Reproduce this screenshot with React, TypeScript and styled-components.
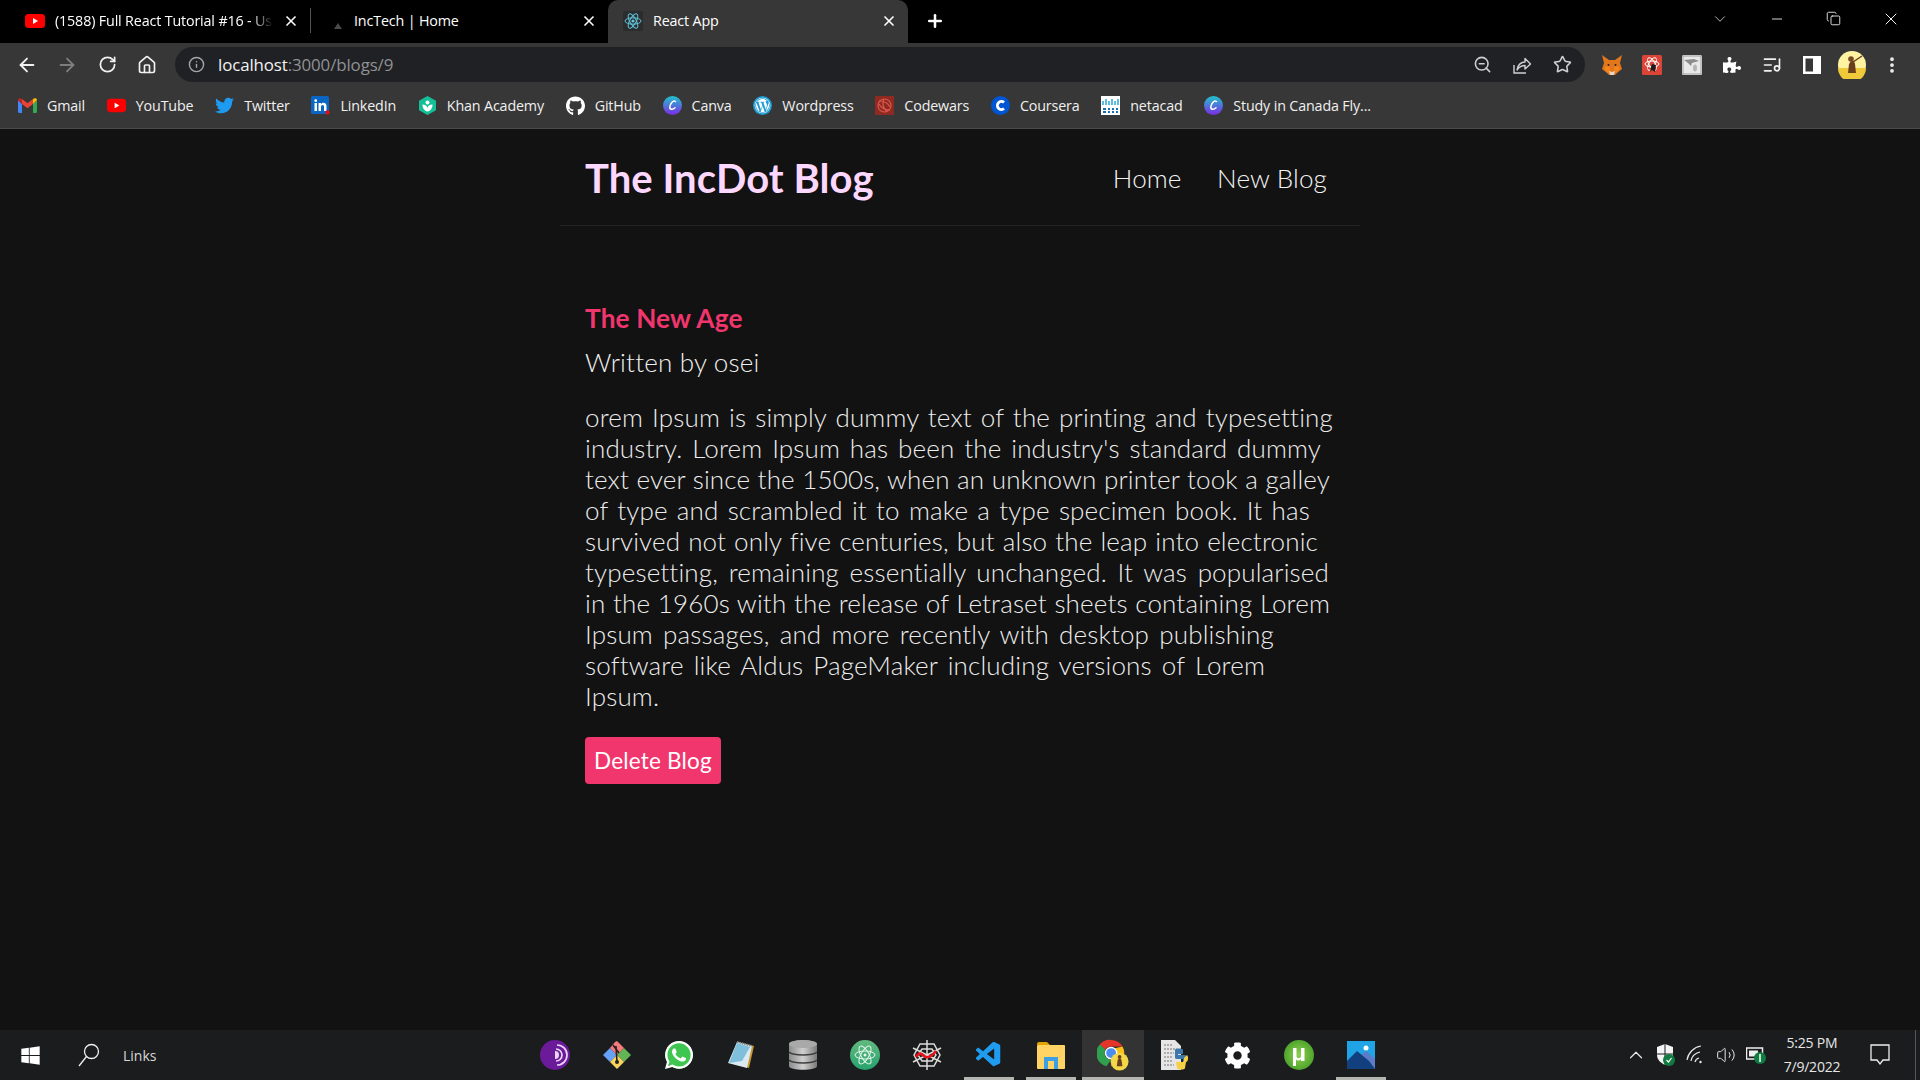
import React from 'react';
import styled, { createGlobalStyle } from 'styled-components';
import { FaTwitter, FaGithub, FaWordpressSimple, FaWhatsapp, FaPuzzlePiece, FaWindows, FaCog } from 'react-icons/fa';
import { VscVscode } from 'react-icons/vsc';
import { ArrowLeft, ArrowRight, RotateCw, Home, Info, ZoomOut, Star, ListMusic, EllipsisVertical, ChevronUp, ChevronDown, Volume2, X, Plus, Minus, Copy } from 'lucide-react';

const Global = createGlobalStyle`
  html, body { margin: 0; padding: 0; background: #121212; }
  #root { width: 1920px; height: 1080px; overflow: hidden; }
`;

const Page = styled.div`
  width: 1920px; height: 1080px; display: flex; flex-direction: column;
  font-family: "Open Sans", "Noto Sans", sans-serif; color: #fff;
`;
const TabStrip = styled.div`
  height: 43px; flex: none; background: #000; display: flex; padding-left: 10px; align-items: stretch;
`;
const Tab = styled.div<{ $active?: boolean; $width: number; $inset: number }>`
  width: ${p => p.$width}px; flex: none; display: flex; align-items: center; padding: 0 11px 2px ${p => p.$inset}px; gap: 10px;
  background: ${p => (p.$active ? '#373737' : 'transparent')};
  border-radius: ${p => (p.$active ? '10px 10px 0 0' : '0')};
  font-size: 14.3px; letter-spacing: -0.15px; box-sizing: border-box; position: relative;
`;
const TabIcon = styled.span`
  width: 20px; height: 20px; flex: none; display: flex; align-items: center; justify-content: center;
`;
const TabTitle = styled.span<{ $fade?: boolean }>`
  flex: 1; white-space: nowrap; overflow: hidden; min-width: 0;
  ${p => (p.$fade ? 'mask-image: linear-gradient(to right, #000 90%, transparent);' : '')}
`;
const TabDivider = styled.div`
  width: 1px; height: 25px; margin: 8px 0 0; background: #555;
`;
const NewTab = styled.div`
  width: 54px; display: flex; align-items: center; justify-content: center; padding-bottom: 2px;
`;
const WindowControls = styled.div`
  margin-left: auto; display: flex; align-items: center; padding: 0 1px 6px 0; color: #f4f4f4;
`;
const WinBtn = styled.div`
  width: 57px; display: flex; justify-content: center;
`;
const Toolbar = styled.div`
  height: 47px; flex: none; background: #373737; display: flex; align-items: center; padding: 0 8px 4px 7px; box-sizing: border-box;
`;
const ToolBtn = styled.div<{ $dim?: boolean }>`
  width: 40px; height: 36px; flex: none; display: flex; align-items: center; justify-content: center;
  color: ${p => (p.$dim ? '#7d7e80' : '#f1f1f1')};
`;
const Omnibox = styled.div`
  width: 1410px; height: 35px; margin-left: 8px; border-radius: 18px; background: #202124;
  display: flex; align-items: center; padding: 0 3px 0 13px; box-sizing: border-box; flex: none;
`;
const UrlIcon = styled.span`
  width: 18px; color: #a4a6a9; display: flex; margin-right: 12px;
`;
const Url = styled.div`
  flex: 1; font-size: 16.9px; letter-spacing: -0.12px; color: #f2f2f2; white-space: nowrap;
`;
const UrlDim = styled.span`
  color: #8f9194;
`;
const OmniBtn = styled.div`
  width: 40px; display: flex; justify-content: center; color: #cfd0d2;
`;
const ExtRow = styled.div`
  display: flex; margin-left: 7px;
`;
const BookmarkBar = styled.div`
  height: 31px; flex: none; background: #373737; display: flex; align-items: center; padding: 0 0 7px 18px;
  border-bottom: 1px solid #4a4a4b; gap: 21.7px;
`;
const Bookmark = styled.div`
  display: flex; align-items: center; gap: 10px; font-size: 14.3px; letter-spacing: -0.15px; color: #f0f0f0; white-space: nowrap;
`;
const BookmarkIcon = styled.span`
  width: 19px; height: 19px; display: flex; align-items: center; justify-content: center; flex: none;
`;
const Viewport = styled.main`
  flex: 1; background: #121212; min-height: 0;
`;
const Column = styled.div`
  width: 800px; margin: 0 auto; font-family: Lato, "Open Sans", sans-serif;
`;
const Nav = styled.nav`
  height: 97px; box-sizing: border-box; padding: 2px 33px 0 25px; display: flex; align-items: center;
  border-bottom: 1px solid #232323;
`;
const Brand = styled.h1`
  margin: 0; color: #fdd8fe; font-size: 40px; font-weight: 700; letter-spacing: 0.05px;
`;
const NavLinks = styled.div`
  margin-left: auto; display: flex; gap: 35.5px;
`;
const NavLink = styled.a`
  color: #f2f2f2; font-size: 26px; font-weight: 300; letter-spacing: 0.15px;
`;
const Article = styled.article`
  padding: 74px 25px 0;
`;
const PostTitle = styled.h2`
  margin: 0; color: #f1356d; font-size: 26.2px; line-height: 36px; font-weight: 700; letter-spacing: 0.15px;
`;
const Author = styled.p`
  margin: 8px 0 0; color: #f0f0f0; font-size: 26px; line-height: 36px; font-weight: 300; letter-spacing: 0.2px;
`;
const Body = styled.div`
  margin-top: 22px; color: #ededed; font-size: 26px; line-height: 31px; font-weight: 300; letter-spacing: 0.15px;
`;
const Line = styled.span<{ $width: number }>`
  display: block; white-space: nowrap; width: ${p => p.$width}px; text-align-last: justify;
`;
const DeleteBtn = styled.button`
  display: block; margin-top: 25px; width: 136px; height: 47px; border: 0; border-radius: 4px; padding: 0;
  background: #f1356d; color: #fff; font: 400 22.5px Lato, sans-serif; letter-spacing: 0.2px;
`;
const Taskbar = styled.footer`
  height: 50px; flex: none; background: #1b1c1e; display: flex; align-items: stretch;
`;
const StartBtn = styled.div`
  width: 60px; display: flex; align-items: center; justify-content: center; color: #fff; flex: none;
`;
const SearchBox = styled.div`
  width: 464px; flex: none; display: flex; align-items: center; gap: 23px; padding-left: 18px; box-sizing: border-box;
  font-size: 14px; color: #d8d8d8;
`;
const TaskApps = styled.div`
  display: flex; flex: none;
`;
const TaskBtn = styled.div<{ $running?: boolean; $active?: boolean }>`
  width: 62px; display: flex; align-items: center; justify-content: center; position: relative;
  background: ${p => (p.$active ? '#333333' : 'transparent')};
  &::after {
    content: ''; position: absolute; bottom: 0; height: 3px; background: #b4b4b0;
    left: ${p => (p.$active ? '0' : '6px')}; right: ${p => (p.$active ? '0' : '6px')};
    display: ${p => (p.$running ? 'block' : 'none')};
  }
`;
const Tray = styled.div`
  margin-left: auto; display: flex; align-items: center; color: #e8e8e8; padding-right: 4px;
`;
const TrayIcon = styled.div`
  width: 30px; display: flex; justify-content: center;
`;
const Clock = styled.div`
  width: 74px; margin: 0 9px 0 4px; text-align: center; font-size: 14px; line-height: 24px; color: #e6e6e6; letter-spacing: -0.2px; white-space: nowrap;
`;
const Notify = styled.div`
  width: 43px; display: flex; justify-content: center; color: #eee; margin-right: 14px;
`;
const ShowDesktop = styled.div`
  width: 1px; height: 50px; background: #55565a;
`;

const Yt = ({ w = 20, h = 14 }: { w?: number; h?: number }) => (
  <svg width={w} height={h} viewBox="0 0 20 14"><rect width="20" height="14" rx="3.5" fill="#f00" /><path d="M8 4l5 3-5 3z" fill="#fff" /></svg>
);
const ReactLogo = () => (
  <svg width="20" height="20" viewBox="0 0 20 20">
    <rect width="20" height="20" rx="2" fill="#2a2c2e" />
    <g fill="none" stroke="#61c6dc" strokeWidth="1">
      <ellipse cx="10" cy="10" rx="8" ry="3.2" />
      <ellipse cx="10" cy="10" rx="8" ry="3.2" transform="rotate(60 10 10)" />
      <ellipse cx="10" cy="10" rx="8" ry="3.2" transform="rotate(120 10 10)" />
    </g>
    <circle cx="10" cy="10" r="1.6" fill="#61c6dc" />
  </svg>
);
const SmallTriangle = () => (
  <svg width="8" height="6" viewBox="0 0 8 6" style={{ marginTop: 10, marginLeft: 8 }}><path d="M4 0l4 6H0z" fill="#4a4a4a" /></svg>
);
const ShareIcon = () => (
  <svg width="20" height="20" viewBox="0 0 20 20" fill="none" stroke="currentColor" strokeWidth="1.400">
    <path d="M2 10v8h12" />
    <path d="M5 15c.5-5 4-8 8-8V3.500L18.500 9 13 14v-3.500c-3.500 0-6 1.500-8 4.500z" strokeLinejoin="round" />
  </svg>
);
const Gmail = () => (
  <svg width="19" height="15" viewBox="0 0 19 15">
    <path d="M0 2v11.5A1.5 1.5 0 0 0 1.5 15H4V6z" fill="#4285f4" />
    <path d="M15 6v9h2.500a1.500 1.500 0 0 0 1.500-1.500V2z" fill="#34a853" />
    <path d="M4 6V1l5.500 4.200L15 1v5l-5.500 4.200z" fill="#ea4335" />
    <path d="M0 2c0-2 2.500-2.500 4-1v5z" fill="#c5221f" />
    <path d="M15 1c1.500-1.500 4-1 4 1l-4 4z" fill="#fbbc04" />
  </svg>
);
const LinkedIn = () => (
  <svg width="19" height="19" viewBox="0 0 19 19">
    <rect width="18" height="18" rx="1.500" fill="#0a66c2" />
    <path d="M3.500 7h2.500v8H3.500zM4.700 3.300a1.400 1.400 0 1 1 0 2.800 1.400 1.400 0 0 1 0-2.800zM7.500 7H10v1.200c.6-.9 1.500-1.400 2.500-1.400 2 0 3 1.300 3 3.400V15H13v-4.200c0-1.100-.4-1.800-1.300-1.800-1 0-1.700.7-1.700 1.900V15H7.500z" fill="#fff" />
    <circle cx="16.500" cy="16.500" r="2.300" fill="#d3131f" />
  </svg>
);
const Khan = () => (
  <svg width="17" height="19" viewBox="0 0 17 19">
    <path d="M8.500 0L17 4.800v9.400L8.500 19 0 14.200V4.800z" fill="#14bf96" />
    <circle cx="8.500" cy="6.500" r="2" fill="#fff" />
    <path d="M3.500 8.500c3 0 4.500 1.500 5 3.500.5-2 2-3.500 5-3.500 0 4-2 6.500-5 7-3-.5-5-3-5-7z" fill="#fff" />
  </svg>
);
const CLogo = ({ from, to, mid }: { from: string; to: string; mid: string }) => (
  <svg width="19" height="19" viewBox="0 0 19 19">
    <defs><linearGradient id={mid} x1="0" y1="0" x2="0" y2="1"><stop offset="0" stopColor={from} /><stop offset="1" stopColor={to} /></linearGradient></defs>
    <circle cx="9.500" cy="9.500" r="9.500" fill={`url(#${mid})`} />
    <path d="M12.500 5.500C10 3.800 7 8 6.800 11c-.2 3 3 3 5.200.8" fill="none" stroke="#fff" strokeWidth="1.500" strokeLinecap="round" />
  </svg>
);
const Coursera = () => (
  <svg width="19" height="19" viewBox="0 0 19 19">
    <circle cx="9.500" cy="9.500" r="9.500" fill="#0056d2" />
    <path d="M13 6.500a4 4 0 1 0 0 6" fill="none" stroke="#fff" strokeWidth="2.800" />
  </svg>
);
const Wp = () => (
  <svg width="19" height="19" viewBox="0 0 19 19">
    <circle cx="9.500" cy="9.500" r="9.500" fill="#1d9bd1" />
    <circle cx="9.500" cy="9.500" r="7.800" fill="#fff" />
    <foreignObject x="2" y="2" width="15" height="15"><FaWordpressSimple size={15} color="#1d9bd1" /></foreignObject>
  </svg>
);
const Codewars = () => (
  <svg width="19" height="19" viewBox="0 0 19 19">
    <rect width="19" height="19" fill="#8e2a21" />
    <g fill="none" stroke="#d8584a" strokeWidth="1.200">
      <circle cx="9.500" cy="9.500" r="6.500" />
      <path d="M4 5c5 0 9 2 11 6M15 14c-5 0-9-2-11-6M9 3c-2 4-1 9 3 13" />
    </g>
  </svg>
);
const Netacad = () => (
  <svg width="19" height="19" viewBox="0 0 19 19">
    <rect width="19" height="19" fill="#fff" />
    <path d="M2 5v4M5 3v6M8 5v4M11 3v6M14 5v4M17 3v6" stroke="#1ba0d7" strokeWidth="1.400" />
    <path d="M2 13h3M7 13h2M11 13h2M15 13h2M2 16h3M7 16h2M11 16h2M15 16h2" stroke="#1b6fb0" strokeWidth="2" />
  </svg>
);
const Fox = () => (
  <svg width="22" height="22" viewBox="0 0 22 22">
    <path d="M1 1l7 5h6l7-5-2 8 2 6-5 4-2 2H8l-2-2-5-4 2-6z" fill="#e2761b" />
    <path d="M3 14l5-3 1 5-2 3zM19 14l-5-3-1 5 2 3z" fill="#f6851b" />
    <path d="M8 17l3 1 3-1-1 4H9z" fill="#e4d5c5" />
    <circle cx="7.500" cy="11" r="1" fill="#222" /><circle cx="14.500" cy="11" r="1" fill="#222" />
  </svg>
);
const RedExt = () => (
  <svg width="20" height="20" viewBox="0 0 20 20">
    <rect width="20" height="20" rx="1.500" fill="#dc4438" />
    <g fill="none" stroke="#fff" strokeWidth="1">
      <ellipse cx="10" cy="9" rx="7" ry="3" /><ellipse cx="10" cy="9" rx="7" ry="3" transform="rotate(60 10 9)" /><ellipse cx="10" cy="9" rx="7" ry="3" transform="rotate(120 10 9)" />
    </g>
    <path d="M10 9l4 1-1 7-3-2-2 2 1-5z" fill="#1a1a1a" />
  </svg>
);
const GrayExt = () => (
  <svg width="20" height="20" viewBox="0 0 20 20">
    <rect width="20" height="20" rx="1.500" fill="#e9e9e9" />
    <rect x="1" y="1" width="18" height="18" fill="none" stroke="#9d9d9d" />
    <path d="M2 5l10-1 5 2-7 2-1 3-3-3z" fill="#8c8c8c" />
    <ellipse cx="13" cy="13" rx="2" ry="3.500" fill="#b5b5b5" />
  </svg>
);
const PanelIcon = () => (
  <svg width="18" height="18" viewBox="0 0 18 18"><path fillRule="evenodd" d="M0 0h18v18H0zM2.500 2.500v13h7.500v-13z" fill="#fff" /></svg>
);
const Avatar = () => (
  <svg width="28" height="28" viewBox="0 0 28 28">
    <circle cx="14" cy="14" r="14" fill="#fdf3a0" />
    <path d="M0 17h28a14 14 0 0 1-28 0z" fill="#f0c93a" />
    <path d="M10 22l1-9 2-3h3l1 3 1 9z" fill="#6b3f1e" />
    <path d="M15 11l9-6" stroke="#6b3f1e" strokeWidth="1.500" />
    <circle cx="13" cy="8" r="2.800" fill="#7a4a24" />
  </svg>
);
const Tor = () => (
  <svg width="30" height="30" viewBox="0 0 30 30">
    <circle cx="15" cy="15" r="15" fill="#6b1a9a" />
    <g fill="none" stroke="#e9d6f5" strokeWidth="1.700">
      <path d="M16 9a6 6 0 0 1 0 12" /><path d="M17 5a10 10 0 0 1 0 20" />
    </g>
    <path d="M15 11a4 4 0 0 1 0 8z" fill="#e9d6f5" />
  </svg>
);
const GitKraken = () => (
  <svg width="30" height="30" viewBox="0 0 30 30">
    <path d="M15 15L8 8 1 15l7 7z" fill="#66a3f7" />
    <path d="M15 15l7-7 7 7-7 7z" fill="#62b455" />
    <path d="M15 15l-7 7 7 7 7-7z" fill="#f9d35e" />
    <path d="M15 15l-7-7 5-6 2-1 7 7z" fill="#f37b7b" />
    <path d="M14 6l1 16M11 5l6 8" stroke="#222" strokeWidth="1.600" /><circle cx="15" cy="22" r="2" fill="#222" />
  </svg>
);
const Notepad = () => (
  <svg width="28" height="30" viewBox="0 0 28 30">
    <path d="M11 2l16 4-5 22L2 23z" fill="#c9972f" />
    <path d="M10 2l15 4-5 22L1 23z" fill="#dbeaf2" />
    <path d="M10 3l13 4-8 14-13 2z" fill="#7fbfdb" />
    <path d="M10 2l15 4" stroke="#7d8b93" strokeWidth="2" strokeDasharray="1.500 1" />
  </svg>
);
const Db = () => (
  <svg width="28" height="30" viewBox="0 0 28 30">
    <defs><linearGradient id="dbg" x1="0" x2="1" y1="0" y2="0"><stop offset="0" stopColor="#8b8b8b" /><stop offset=".5" stopColor="#cfcfcf" /><stop offset="1" stopColor="#7b7b7b" /></linearGradient></defs>
    <path d="M0 4c0-5 28-5 28 0v22c0 5-28 5-28 0z" fill="url(#dbg)" />
    <ellipse cx="14" cy="4" rx="14" ry="4" fill="#a9a9a9" />
    <path d="M0 12c4 4 24 4 28 0M0 20c4 4 24 4 28 0" fill="none" stroke="#3d3d3d" strokeWidth="1.500" />
  </svg>
);
const Atom = () => (
  <svg width="30" height="30" viewBox="0 0 30 30">
    <defs><linearGradient id="atg" x1="0" x2="0" y1="0" y2="1"><stop offset="0" stopColor="#62ba80" /><stop offset="1" stopColor="#26a26d" /></linearGradient></defs>
    <circle cx="15" cy="15" r="15" fill="url(#atg)" />
    <g fill="none" stroke="#e8f7ee" strokeWidth="1">
      <ellipse cx="15" cy="15" rx="10" ry="4" /><ellipse cx="15" cy="15" rx="10" ry="4" transform="rotate(60 15 15)" /><ellipse cx="15" cy="15" rx="10" ry="4" transform="rotate(120 15 15)" />
    </g>
    <circle cx="15" cy="15" r="1.500" fill="#e8f7ee" />
  </svg>
);
const Web = () => (
  <svg width="30" height="30" viewBox="0 0 30 30">
    <g fill="none" stroke="#dcdcdc" strokeWidth="1.500">
      <path d="M15 0v30M1 8l28 14M1 22L29 8" />
      <path d="M8 4h14l6 11-6 11H8L2 15z" />
      <path d="M10 9h10l4 6-4 6H10l-4-6z" />
    </g>
    <path d="M4 17c4-7 7-1 10 0s6-1 10-6" fill="none" stroke="#e5121a" strokeWidth="2.600" />
  </svg>
);
const Folder = () => (
  <svg width="28" height="27" viewBox="0 0 28 27">
    <path d="M0 2a2 2 0 0 1 2-2h8l3 3h-13z" fill="#e2a500" />
    <rect y="3" width="28" height="24" rx="1" fill="#ffd364" />
    <path d="M7 27V15h14v12h-4v-8h-6v8z" fill="#3a9fe3" />
  </svg>
);
const Chrome = () => (
  <svg width="32" height="32" viewBox="0 0 34 34">
    <path d="M15 1a14 14 0 0 1 12.100 7H15a7 7 0 0 0-6 3.500L3 5.800A14 14 0 0 1 15 1z" fill="#e5352a" />
    <path d="M3 5.800l6 5.700A7 7 0 0 0 15 22l-5 7A14 14 0 0 1 3 5.800z" fill="#2fa04f" />
    <path d="M27.100 8a14 14 0 0 1-12 21l3-8a7 7 0 0 0 0-11z" fill="#fbc116" />
    <circle cx="15" cy="15" r="6" fill="#4a8cf0" stroke="#fff" strokeWidth="1.500" />
    <circle cx="24" cy="24" r="9.500" fill="#f4d748" />
    <path d="M21 29l1-7 2-2 2 2 1 7z" fill="#6b3f1e" /><circle cx="24" cy="19" r="2" fill="#6b3f1e" />
  </svg>
);
const PyFile = () => (
  <svg width="28" height="30" viewBox="0 0 28 30">
    <path d="M0 0h14l6 6v24H0z" fill="#e6e6e6" />
    <path d="M3 5h9M3 9h13M3 13h10M3 17h8M3 21h8M3 25h10" stroke="#9a9a9a" strokeWidth="1.300" strokeDasharray="2 1" />
    <path d="M14 10c0-2 8-2 8 0v4h-5v1h7c2 0 2 7-1 7h-1v-3h-6c-2 0-2-1-2-2z" fill="#3c78aa" />
    <path d="M15 22h6c2 0 2-2 2-3v-1l3-3c2 2 1 7-1 7l-1 6c0 2-8 2-8 0z" fill="#f7cf45" />
  </svg>
);
const UTorrent = () => (
  <svg width="30" height="30" viewBox="0 0 30 30">
    <defs><radialGradient id="ut"><stop offset="0" stopColor="#8fcf50" /><stop offset="1" stopColor="#4fa52c" /></radialGradient></defs>
    <circle cx="15" cy="15" r="15" fill="url(#ut)" />
    <path d="M9 8h3.500v8c0 3 4.500 3 4.500 0V8h3.500v13H17v-2c-1.500 2-4 2-5 .5V26H9z" fill="#fff" />
  </svg>
);
const Photos = () => (
  <svg width="28" height="28" viewBox="0 0 28 28">
    <rect width="28" height="28" fill="#20a4e6" />
    <circle cx="19" cy="7" r="2.500" fill="#fff" />
    <path d="M14 14l5-4 9 8v10H14z" fill="#5b7cc9" />
    <path d="M0 20l10-10 12 10 6 8H0z" fill="#123f7d" />
  </svg>
);
const Shield = () => (
  <svg width="20" height="24" viewBox="0 0 20 24">
    <path d="M9 1l8 3v8c0 5-4 8-8 10-4-2-8-5-8-10V4z" fill="#f4f4f4" />
    <path d="M9 1v21" stroke="#1b1c1e" strokeWidth="1" /><path d="M1 11h16" stroke="#1b1c1e" strokeWidth="1" />
    <circle cx="13" cy="17" r="6" fill="#107c41" />
    <path d="M10.500 17l2 2 3-4" fill="none" stroke="#fff" strokeWidth="1.200" />
  </svg>
);
const Battery = () => (
  <svg width="20" height="18" viewBox="0 0 20 18">
    <rect x=".5" y="2" width="16" height="11" fill="none" stroke="#eee" strokeWidth="1.500" />
    <rect x="3" y="4.500" width="9" height="6" fill="#eee" />
    <circle cx="14" cy="12" r="6" fill="#107c41" />
    <path d="M14 8v8" stroke="#fff" strokeWidth="1.500" />
  </svg>
);
const SearchGlyph = () => (
  <svg width="22" height="24" viewBox="0 0 22 24" fill="none" stroke="#f0f0f0" strokeWidth="1.300">
    <circle cx="13.500" cy="8.500" r="7" />
    <path d="M8.500 13.500L1 23" />
  </svg>
);
const WifiGlyph = () => (
  <svg width="20" height="20" viewBox="0 0 20 20" fill="none" stroke="#e8e8e8" strokeWidth="1.200">
    <path d="M1 15C2 8 8 2 15 1M5 16c.8-4.500 4.500-8 9-9M9 17c.5-2 2-3.500 4-4" />
    <circle cx="14.500" cy="17" r="1.200" fill="#e8e8e8" stroke="none" />
  </svg>
);
const NotifyGlyph = () => (
  <svg width="20" height="22" viewBox="0 0 20 22" fill="none" stroke="#eee" strokeWidth="1.300">
    <path d="M1 1h18v15h-6l-3 4-3-4H1z" />
  </svg>
);

const lines: [string, number][] = [
  ['orem Ipsum is simply dummy text of the printing and typesetting', 748],
  ["industry. Lorem Ipsum has been the industry's standard dummy", 736],
  ['text ever since the 1500s, when an unknown printer took a galley', 745],
  ['of type and scrambled it to make a type specimen book. It has', 725],
  ['survived not only five centuries, but also the leap into electronic', 733],
  ['typesetting, remaining essentially unchanged. It was popularised', 744],
  ['in the 1960s with the release of Letraset sheets containing Lorem', 745],
  ['Ipsum passages, and more recently with desktop publishing', 689],
  ['software like Aldus PageMaker including versions of Lorem', 680],
  ['Ipsum.', 75],
];

const bookmarks: [string, React.ReactNode][] = [
  ['Gmail', <Gmail />],
  ['YouTube', <Yt w={22} h={15} />],
  ['Twitter', <FaTwitter size={19} color="#1d9bf0" />],
  ['LinkedIn', <LinkedIn />],
  ['Khan Academy', <Khan />],
  ['GitHub', <FaGithub size={20} color="#fff" />],
  ['Canva', <CLogo from="#20c4cb" to="#7d2ae8" mid="cv1" />],
  ['Wordpress', <Wp />],
  ['Codewars', <Codewars />],
  ['Coursera', <Coursera />],
  ['netacad', <Netacad />],
  ['Study in Canada Fly...', <CLogo from="#20c4cb" to="#7d2ae8" mid="cv2" />],
];

const apps: { icon: React.ReactNode; running?: boolean; active?: boolean }[] = [
  { icon: <Tor /> },
  { icon: <GitKraken /> },
  { icon: <FaWhatsapp size={32} color="#fff" style={{ background: 'radial-gradient(circle, #3fc651 60%, transparent 62%)' }} /> },
  { icon: <Notepad /> },
  { icon: <Db /> },
  { icon: <Atom /> },
  { icon: <Web /> },
  { icon: <VscVscode size={30} color="#1f9cf0" />, running: true },
  { icon: <Folder />, running: true },
  { icon: <Chrome />, running: true, active: true },
  { icon: <PyFile /> },
  { icon: <FaCog size={27} color="#fff" /> },
  { icon: <UTorrent /> },
  { icon: <Photos />, running: true },
];

export default function App() {
  return (
    <Page>
      <Global />
      <TabStrip>
        <Tab $width={300} $inset={15}>
          <TabIcon><Yt /></TabIcon>
          <TabTitle $fade>(1588) Full React Tutorial #16 - Using</TabTitle>
          <X size={16} strokeWidth={2.500} />
        </Tab>
        <TabDivider />
        <Tab $width={297} $inset={13}>
          <TabIcon><SmallTriangle /></TabIcon>
          <TabTitle>IncTech | Home</TabTitle>
          <X size={16} strokeWidth={2.500} />
        </Tab>
        <Tab $width={300} $active $inset={15}>
          <TabIcon><ReactLogo /></TabIcon>
          <TabTitle>React App</TabTitle>
          <X size={16} strokeWidth={2.500} />
        </Tab>
        <NewTab><Plus size={20} strokeWidth={3} /></NewTab>
        <WindowControls>
          <WinBtn><ChevronDown size={18} strokeWidth={1} /></WinBtn>
          <WinBtn><Minus size={16} strokeWidth={1.300} /></WinBtn>
          <WinBtn><Copy size={15} strokeWidth={1.400} /></WinBtn>
          <WinBtn><X size={20} strokeWidth={1.200} /></WinBtn>
        </WindowControls>
      </TabStrip>
      <Toolbar>
        <ToolBtn><ArrowLeft size={22} /></ToolBtn>
        <ToolBtn $dim><ArrowRight size={22} /></ToolBtn>
        <ToolBtn><RotateCw size={19} strokeWidth={2.200} /></ToolBtn>
        <ToolBtn><Home size={20} strokeWidth={2} /></ToolBtn>
        <Omnibox>
          <UrlIcon><Info size={17} /></UrlIcon>
          <Url>localhost<UrlDim>:3000/blogs/9</UrlDim></Url>
          <OmniBtn><ZoomOut size={19} /></OmniBtn>
          <OmniBtn><ShareIcon /></OmniBtn>
          <OmniBtn><Star size={19} /></OmniBtn>
        </Omnibox>
        <ExtRow>
          <ToolBtn><Fox /></ToolBtn>
          <ToolBtn><RedExt /></ToolBtn>
          <ToolBtn><GrayExt /></ToolBtn>
          <ToolBtn><FaPuzzlePiece size={18} color="#fff" /></ToolBtn>
          <ToolBtn><ListMusic size={20} /></ToolBtn>
          <ToolBtn><PanelIcon /></ToolBtn>
          <ToolBtn><Avatar /></ToolBtn>
          <ToolBtn><EllipsisVertical size={20} strokeWidth={2.500} /></ToolBtn>
        </ExtRow>
      </Toolbar>
      <BookmarkBar>
        {bookmarks.map(([label, icon]) => (
          <Bookmark key={label}><BookmarkIcon>{icon}</BookmarkIcon>{label}</Bookmark>
        ))}
      </BookmarkBar>
      <Viewport>
        <Column>
          <Nav>
            <Brand>The IncDot Blog</Brand>
            <NavLinks>
              <NavLink>Home</NavLink>
              <NavLink>New Blog</NavLink>
            </NavLinks>
          </Nav>
          <Article>
            <PostTitle>The New Age</PostTitle>
            <Author>Written by osei</Author>
            <Body>{lines.map(([l, w]) => <Line key={l} $width={w}>{l}</Line>)}</Body>
            <DeleteBtn>Delete Blog</DeleteBtn>
          </Article>
        </Column>
      </Viewport>
      <Taskbar>
        <StartBtn><FaWindows size={21} /></StartBtn>
        <SearchBox><SearchGlyph />Links</SearchBox>
        <TaskApps>
          {apps.map((a, i) => <TaskBtn key={i} $running={a.running} $active={a.active}>{a.icon}</TaskBtn>)}
        </TaskApps>
        <Tray>
          <TrayIcon><ChevronUp size={22} strokeWidth={1.300} /></TrayIcon>
          <TrayIcon><Shield /></TrayIcon>
          <TrayIcon><WifiGlyph /></TrayIcon>
          <TrayIcon><Volume2 size={20} strokeWidth={1.200} /></TrayIcon>
          <TrayIcon><Battery /></TrayIcon>
          <Clock>5:25 PM<br />7/9/2022</Clock>
          <Notify><NotifyGlyph /></Notify>
          <ShowDesktop />
        </Tray>
      </Taskbar>
    </Page>
  );
}
